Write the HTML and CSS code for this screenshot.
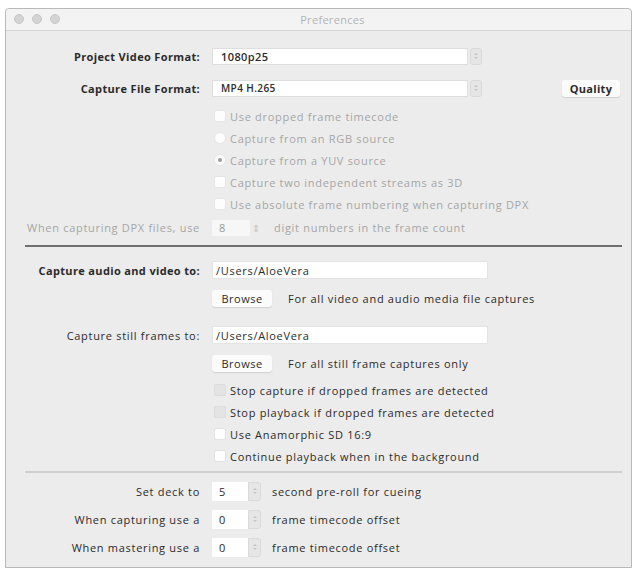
FILE: index.html
```html
<!DOCTYPE html>
<html lang="en">
<head>
    <meta charset="UTF-8">
    <title>Preferences</title>
    <link rel="stylesheet" href="styles.css">
</head>
<body>
    <div class="window">
        <div class="titlebar">
            <span class="lights"><i></i><i></i><i></i></span>
            <span class="title">Preferences</span>
        </div>

        <div class="section top">
            <div class="row tall">
                <span class="label bold">Project Video Format:</span>
                <span class="select"><span class="value">1080p25</span></span>
                <span class="stepper"><i class="up"></i><i class="down"></i></span>
            </div>
            <div class="row tall">
                <span class="label bold">Capture File Format:</span>
                <span class="select"><span class="value small">MP4 H.265</span></span>
                <span class="stepper"><i class="up"></i><i class="down"></i></span>
                <button class="btn quality">Quality</button>
            </div>

            <div class="row check disabled first">
                <span class="box"></span>Use dropped frame timecode
            </div>
            <div class="row check disabled">
                <span class="box radio"></span>Capture from an RGB source
            </div>
            <div class="row check disabled">
                <span class="box radio on"></span>Capture from a YUV source
            </div>
            <div class="row check disabled">
                <span class="box"></span>Capture two independent streams as 3D
            </div>
            <div class="row check disabled">
                <span class="box"></span>Use absolute frame numbering when capturing DPX
            </div>

            <div class="row dpx disabled">
                <span class="label">When capturing DPX files, use</span>
                <span class="num wide">8</span>
                <span class="spin">&#8661;</span>
                <span class="after">digit numbers in the frame count</span>
            </div>
        </div>

        <div class="divider dark"></div>

        <div class="section">
            <div class="row path">
                <span class="label bold">Capture audio and video to:</span>
                <span class="input">/Users/AloeVera</span>
            </div>
            <div class="row browse">
                <button class="btn">Browse</button>
                <span class="after">For all video and audio media file captures</span>
            </div>
            <div class="row path still">
                <span class="label">Capture still frames to:</span>
                <span class="input">/Users/AloeVera</span>
            </div>
            <div class="row browse">
                <button class="btn">Browse</button>
                <span class="after">For all still frame captures only</span>
            </div>

            <div class="row check first2">
                <span class="box grey"></span>Stop capture if dropped frames are detected
            </div>
            <div class="row check">
                <span class="box grey"></span>Stop playback if dropped frames are detected
            </div>
            <div class="row check">
                <span class="box"></span>Use Anamorphic SD 16:9
            </div>
            <div class="row check">
                <span class="box"></span>Continue playback when in the background
            </div>
        </div>

        <div class="divider light"></div>

        <div class="section bottom">
            <div class="row deck">
                <span class="label">Set deck to</span>
                <span class="num">5</span>
                <span class="stepper"><i class="up"></i><i class="down"></i></span>
                <span class="after">second pre-roll for cueing</span>
            </div>
            <div class="row deck">
                <span class="label">When capturing use a</span>
                <span class="num">0</span>
                <span class="stepper"><i class="up"></i><i class="down"></i></span>
                <span class="after">frame timecode offset</span>
            </div>
            <div class="row deck">
                <span class="label">When mastering use a</span>
                <span class="num">0</span>
                <span class="stepper"><i class="up"></i><i class="down"></i></span>
                <span class="after">frame timecode offset</span>
            </div>
        </div>
    </div>
</body>
</html>
```

FILE: styles.css
```css
body {
    margin: 0;
    background-color: #fff;
    font-family: "Open Sans", "DejaVu Sans", sans-serif;
    font-size: 11px;
    letter-spacing: 0.7px;
    color: #2b2b2b;
}

.window {
    width: 625px;
    margin: 8px 0 0 5px;
    padding-bottom: 6px;
    background-color: #ececec;
    border: 1px solid #b9b9b9;
    border-radius: 4px 4px 0 0;
}

.titlebar {
    position: relative;
    height: 21px;
    display: flex;
    align-items: center;
    justify-content: center;
    background-color: #f3f3f3;
    border-bottom: 1px solid #d6d6d6;
    border-radius: 4px 4px 0 0;
}

.lights {
    position: absolute;
    left: 8px;
    top: 5px;
    display: flex;
    gap: 8px;
}

.lights i {
    width: 10px;
    height: 10px;
    border-radius: 50%;
    background-color: #d4d4d4;
    border: 1px solid #c8c8c8;
    box-sizing: border-box;
}

.title {
    color: #b3b3b3;
    font-size: 11px;
    letter-spacing: 0.3px;
    padding-left: 28px;
}

.row {
    display: flex;
    align-items: center;
    white-space: nowrap;
}

.label {
    flex: 0 0 194px;
    margin-right: 12px;
    text-align: right;
}

.bold {
    font-weight: bold;
    letter-spacing: 0.35px;
}

.disabled {
    color: #a6a6a6;
}

.section.top {
    padding-top: 9px;
}

.row.tall {
    height: 32px;
}

.select {
    width: 256px;
    height: 17px;
    box-sizing: border-box;
    background-color: #fff;
    border: 1px solid #dedede;
    display: flex;
    align-items: center;
    padding-left: 8px;
}

.value {
    font-weight: 600;
    letter-spacing: 0.4px;
}

.value.small {
    font-size: 10px;
}

.stepper {
    width: 12px;
    height: 17px;
    margin-left: 2px;
    box-sizing: border-box;
    background-color: #e6e6e6;
    border: 1px solid #dadada;
    border-radius: 3px;
    display: flex;
    flex-direction: column;
    align-items: center;
    justify-content: center;
    gap: 2px;
}

.stepper i {
    width: 0;
    height: 0;
    border-left: 2px solid transparent;
    border-right: 2px solid transparent;
}

.stepper .up {
    border-bottom: 2px solid #c4c4c4;
}

.stepper .down {
    border-top: 2px solid #c4c4c4;
}

.btn {
    font-family: inherit;
    font-size: 11px;
    letter-spacing: 0.5px;
    color: #2b2b2b;
    background-color: #fbfbfb;
    border: none;
    border-radius: 3px;
    box-shadow: 0 1px 1px rgba(0,0,0,0.12);
    height: 17px;
    padding: 0 9px;
}

.quality {
    margin-left: auto;
    margin-right: 11px;
    width: 58px;
    padding: 0;
    font-weight: bold;
    letter-spacing: 0.3px;
}

.row.check {
    height: 22px;
    padding-left: 208px;
}

.row.check.first {
    margin-top: 1px;
}

.box {
    width: 12px;
    height: 12px;
    box-sizing: border-box;
    margin-right: 4px;
    background-color: #f1f1f1;
    border: 1px solid #e2e2e2;
    border-radius: 2px;
    position: relative;
}

.disabled .box {
    background-color: #f0f0f0;
    border-color: #e6e6e6;
}

.box.radio {
    border-radius: 50%;
}

.box.radio.on::after {
    content: "";
    position: absolute;
    left: 3px;
    top: 3px;
    width: 4px;
    height: 4px;
    border-radius: 50%;
    background-color: #9a9a9a;
}

.box.grey {
    background-color: #e4e4e4;
    border-color: #dcdcdc;
}

.row.check .box:not(.grey) {
    background-color: #fdfdfd;
}

.disabled .box:not(.grey) {
    background-color: #efefef;
}

.row.dpx {
    height: 25px;
}

.num {
    width: 38px;
    height: 16px;
    box-sizing: border-box;
    padding-left: 7px;
    background-color: #f7f7f7;
    display: flex;
    align-items: center;
}

.dpx .num {
    color: #9a9a9a;
}

.spin {
    width: 10px;
    margin-left: 2px;
    color: #c4c4c4;
    font-size: 10px;
}

.after {
    margin-left: 12px;
}

.divider {
    margin: 0 9px 0 19px;
}

.divider.dark {
    height: 2px;
    margin-top: 5px;
    background-color: #6f6f6f;
}

.divider.light {
    height: 2px;
    margin-top: 4px;
    background-color: #cfcfcf;
}

.row.path {
    height: 24px;
    margin-top: 11px;
}

.row.path.still {
    margin-top: 13px;
}

.input {
    width: 276px;
    height: 18px;
    box-sizing: border-box;
    padding-left: 3px;
    background-color: #fff;
    border: 1px solid #e4e4e4;
    display: flex;
    align-items: center;
}

.row.browse {
    height: 24px;
    margin-top: 4px;
    padding-left: 206px;
}

.row.browse .btn {
    width: 60px;
    padding: 0;
}

.row.browse .after {
    margin-left: 16px;
}

.row.check.first2 {
    margin-top: 4px;
}

.section.bottom {
    padding-top: 4px;
}

.row.deck {
    height: 28px;
}

.deck .num {
    width: 36px;
    height: 19px;
    background-color: #fff;
}

.deck .stepper {
    height: 19px;
    width: 13px;
    margin-left: 0;
    border-radius: 0 3px 3px 0;
}

.deck .after {
    margin-left: 11px;
}
```
